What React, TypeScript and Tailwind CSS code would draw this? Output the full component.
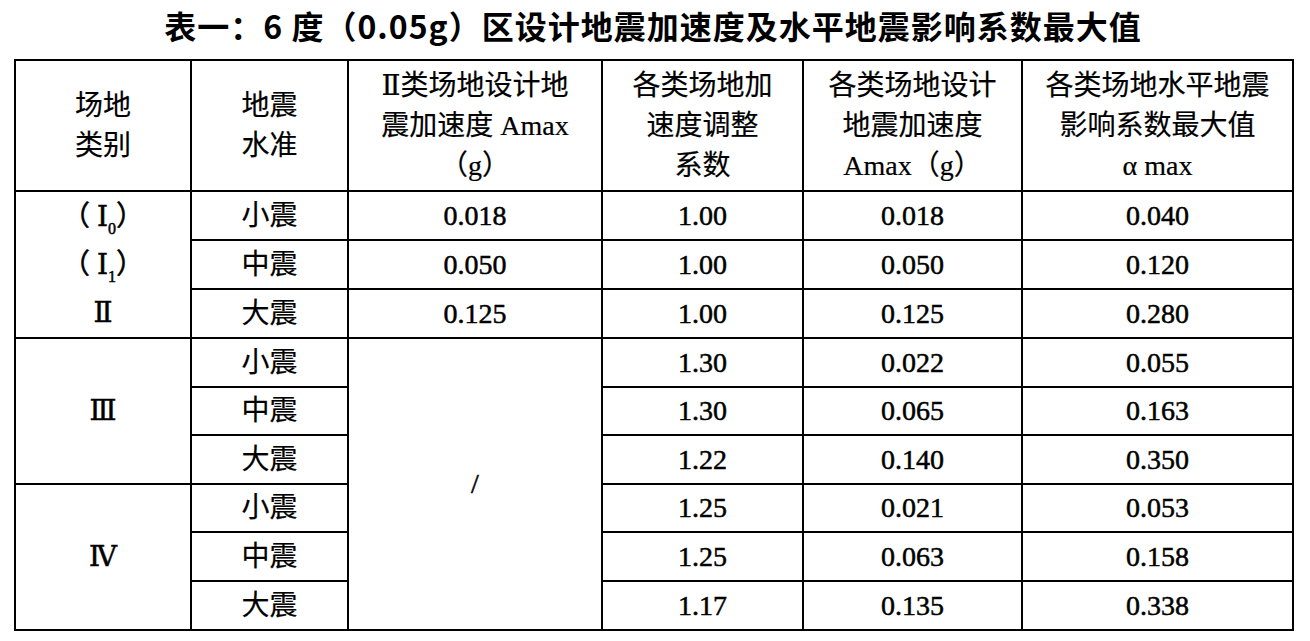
export default function App() {
  const body = '"Liberation Serif", "DejaVu Serif", "Noto Sans CJK SC", serif'

  const groups = [
    {
      label: (
        <>
          <div>（ Ⅰ<sub className="text-[16px] align-[-4px]">0</sub>）</div>
          <div>（ Ⅰ<sub className="text-[16px] align-[-4px]">1</sub>）</div>
          <div>Ⅱ</div>
        </>
      ),
      multi: true,
      rows: [
        { level: "小震", amax: "0.018", k: "1.00", a: "0.018", alpha: "0.040", h: "h-[49px]" },
        { level: "中震", amax: "0.050", k: "1.00", a: "0.050", alpha: "0.120", h: "h-[49px]" },
        { level: "大震", amax: "0.125", k: "1.00", a: "0.125", alpha: "0.280", h: "h-[49px]" },
      ],
    },
    {
      label: <div>Ⅲ</div>,
      multi: false,
      rows: [
        { level: "小震", amax: "", k: "1.30", a: "0.022", alpha: "0.055", h: "h-[49px]" },
        { level: "中震", amax: "", k: "1.30", a: "0.065", alpha: "0.163", h: "h-[48px]" },
        { level: "大震", amax: "", k: "1.22", a: "0.140", alpha: "0.350", h: "h-[49px]" },
      ],
    },
    {
      label: <div>Ⅳ</div>,
      multi: false,
      rows: [
        { level: "小震", amax: "", k: "1.25", a: "0.021", alpha: "0.053", h: "h-[48px]" },
        { level: "中震", amax: "", k: "1.25", a: "0.063", alpha: "0.158", h: "h-[49px]" },
        { level: "大震", amax: "", k: "1.17", a: "0.135", alpha: "0.338", h: "h-[49px]" },
      ],
    },
  ]

  const cell = "border-2 border-black text-center align-middle p-0"
  const num = `${cell} [-webkit-text-stroke:0.5px_black]`

  return (
    <div className="w-[1310px] h-[641px] bg-white text-black overflow-hidden">
      <div className="pl-[14px] w-[1292px]">
        <h1
          className="h-[59px] pt-[5px] text-center text-[32px] leading-[40px] font-bold tracking-[1px]"
          style={{ fontFamily: '"Noto Sans CJK SC", sans-serif' }}
        >
          表一：6 度（0.05g）区设计地震加速度及水平地震影响系数最大值
        </h1>

        <table
          className="table-fixed border-collapse w-[1278px] text-[28px] leading-[40px] font-normal [-webkit-text-stroke:0.2px_black]"
          style={{ fontFamily: body }}
        >
          <colgroup>
            <col className="w-[176px]" />
            <col className="w-[157px]" />
            <col className="w-[254px]" />
            <col className="w-[201px]" />
            <col className="w-[219px]" />
            <col className="w-[271px]" />
          </colgroup>
          <thead>
            <tr className="h-[131px]">
              <th className={`${cell} font-normal`}>
                场地<br />类别
              </th>
              <th className={`${cell} font-normal`}>
                地震<br />水准
              </th>
              <th className={`${cell} font-normal whitespace-nowrap`}>
                Ⅱ类场地设计地<br />震加速度 Amax<br />（g）
              </th>
              <th className={`${cell} font-normal whitespace-nowrap`}>
                各类场地加<br />速度调整<br />系数
              </th>
              <th className={`${cell} font-normal whitespace-nowrap`}>
                各类场地设计<br />地震加速度<br />Amax（g）
              </th>
              <th className={`${cell} font-normal whitespace-nowrap`}>
                各类场地水平地震<br />影响系数最大值<br />α max
              </th>
            </tr>
          </thead>
          <tbody>
            {groups.map((g, gi) =>
              g.rows.map((r, ri) => (
                <tr key={`${gi}-${ri}`} className={r.h}>
                  {ri === 0 && (
                    <td rowSpan={3} className={`${num} ${g.multi ? "leading-[48px]" : ""}`}>
                      {g.label}
                    </td>
                  )}
                  <td className={cell}>{r.level}</td>
                  {gi === 0 && <td className={num}>{r.amax}</td>}
                  {gi === 1 && ri === 0 && (
                    <td rowSpan={6} className={num}>
                      /
                    </td>
                  )}
                  <td className={num}>{r.k}</td>
                  <td className={num}>{r.a}</td>
                  <td className={num}>{r.alpha}</td>
                </tr>
              ))
            )}
          </tbody>
        </table>
      </div>
    </div>
  )
}
